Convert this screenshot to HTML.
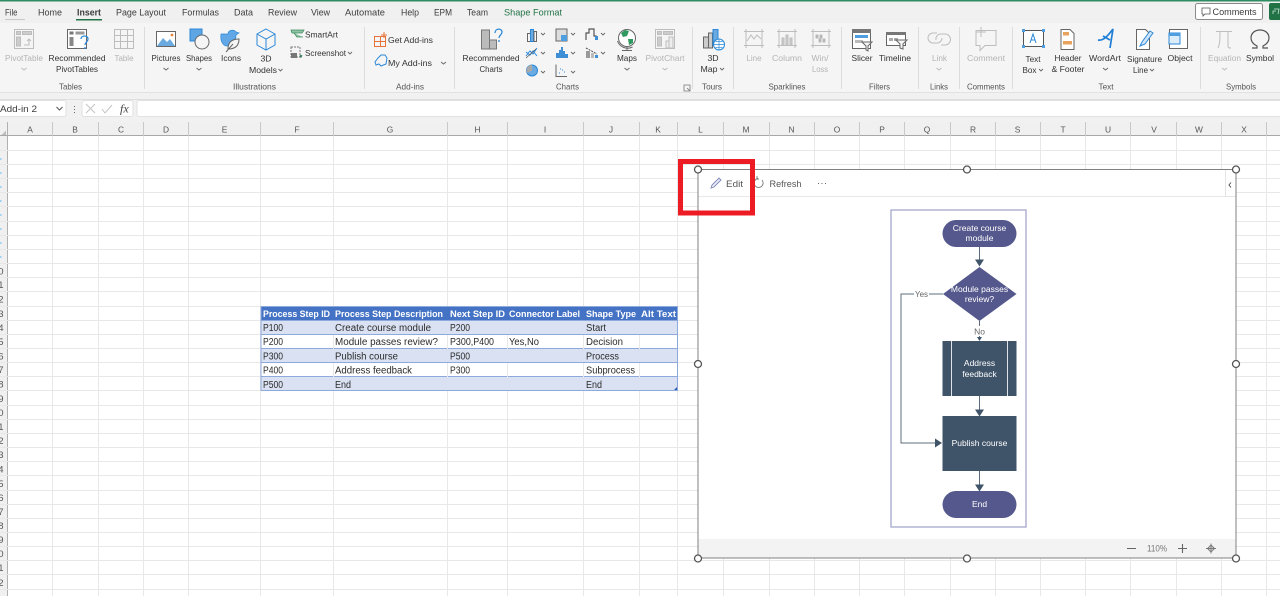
<!DOCTYPE html>
<html><head><meta charset="utf-8"><style>
html,body{margin:0;padding:0;background:#fff;width:1280px;height:596px;overflow:hidden}
svg{display:block;font-family:"Liberation Sans",sans-serif;filter:blur(.3px)}
text{fill:#333;font-size:8.7px}
.m{text-anchor:middle}
.d{fill:#b4b4b4}
.t{font-size:9.5px;fill:#3c3c3c}
.g{fill:#555;font-size:8.4px}
.c{font-size:10px;fill:#2b2b2b}
.h{font-size:9.5px;font-weight:bold;fill:#fff}
.w{fill:#fff;font-size:8.5px;text-anchor:middle}
.r{fill:#555;text-anchor:end;font-size:9.5px}
.dis{fill:none;stroke:#bdbdbd;stroke-width:1}
.ch{fill:none;stroke:#666;stroke-width:.9}
</style></head><body>
<svg width="1280" height="596" viewBox="0 0 1280 596" xmlns="http://www.w3.org/2000/svg">
<rect width="1280" height="596" fill="#fff"/>
<rect width="1280" height="23" fill="#f0f0f0"/>
<rect width="1280" height="1.500" fill="#2e8b62"/>
<rect y="23" width="1280" height="69" fill="#f5f5f5"/>
<rect y="92" width="1280" height="30" fill="#f1f1f1"/>
<rect y="92" width="1280" height="1" fill="#e2e2e2"/>
<rect y="99" width="1280" height="1" fill="#dedede"/>

<!-- tabs -->
<text x="5" y="15.500" class="t" textLength="12.500" lengthAdjust="spacingAndGlyphs">File</text>
<text x="38" y="15.500" class="t" textLength="24" lengthAdjust="spacingAndGlyphs">Home</text>
<text x="77" y="15.500" class="t" style="font-weight:bold;font-size:9px" textLength="24" lengthAdjust="spacingAndGlyphs">Insert</text>
<text x="116" y="15.500" class="t" textLength="50" lengthAdjust="spacingAndGlyphs">Page Layout</text>
<text x="182" y="15.500" class="t" textLength="37" lengthAdjust="spacingAndGlyphs">Formulas</text>
<text x="234" y="15.500" class="t" textLength="19" lengthAdjust="spacingAndGlyphs">Data</text>
<text x="268" y="15.500" class="t" textLength="29" lengthAdjust="spacingAndGlyphs">Review</text>
<text x="311" y="15.500" class="t" textLength="19" lengthAdjust="spacingAndGlyphs">View</text>
<text x="345" y="15.500" class="t" textLength="40" lengthAdjust="spacingAndGlyphs">Automate</text>
<text x="401" y="15.500" class="t" textLength="18" lengthAdjust="spacingAndGlyphs">Help</text>
<text x="434" y="15.500" class="t" textLength="18" lengthAdjust="spacingAndGlyphs">EPM</text>
<text x="467" y="15.500" class="t" textLength="21" lengthAdjust="spacingAndGlyphs">Team</text>
<text x="504" y="15.500" class="t" style="fill:#217346" textLength="58" lengthAdjust="spacingAndGlyphs">Shape Format</text>
<rect x="5" y="19" width="20" height="1" fill="#c8c8c8"/>
<rect x="76" y="19" width="26" height="1.500" fill="#217346"/>
<rect x="1195.500" y="3.500" width="67" height="16" rx="2" fill="#fff" stroke="#8a8a8a"/>
<path d="M1202 8h8v6h-5l-2 2v-2h-1z" fill="none" stroke="#555" stroke-width=".8"/>
<text x="1212.500" y="15" class="t" textLength="44" lengthAdjust="spacingAndGlyphs">Comments</text>
<rect x="1269" y="3" width="14" height="17" rx="2" fill="#217346"/>
<path d="M1273 14v-3h3M1274 9l5 0-1 5" fill="none" stroke="#cfe6da" stroke-width=".8"/>

<!-- separators -->
<path d="M144.500 27v62M364.500 27v62M454.500 27v62M692.500 27v62M733.500 27v62M841.500 27v62M918.500 27v62M959.500 27v62M1012.500 27v62M1200.500 27v62" stroke="#dcdcdc"/>

<!-- ribbon labels -->
<text x="24" y="61" class="m d" textLength="38" lengthAdjust="spacingAndGlyphs">PivotTable</text>
<path d="M21.500 68l2.500 2 2.500-2" class="dis"/>
<text x="77" y="61" class="m" textLength="57" lengthAdjust="spacingAndGlyphs">Recommended</text>
<text x="77" y="72" class="m" textLength="42" lengthAdjust="spacingAndGlyphs">PivotTables</text>
<text x="124" y="61" class="m d" textLength="19" lengthAdjust="spacingAndGlyphs">Table</text>
<text x="166" y="61" class="m" textLength="29" lengthAdjust="spacingAndGlyphs">Pictures</text><path d="M163.500 68l2.500 2 2.500-2" class="ch"/>
<text x="199" y="61" class="m" textLength="26" lengthAdjust="spacingAndGlyphs">Shapes</text><path d="M196.500 68l2.500 2 2.500-2" class="ch"/>
<text x="231" y="61" class="m" textLength="20" lengthAdjust="spacingAndGlyphs">Icons</text>
<text x="266" y="61.500" class="m">3D</text>
<text x="263" y="73" class="m" textLength="28" lengthAdjust="spacingAndGlyphs">Models</text><path d="M278.500 69l2 2 2-2" class="ch"/>
<text x="305" y="37.500" textLength="33" lengthAdjust="spacingAndGlyphs">SmartArt</text>
<text x="305" y="56" textLength="41" lengthAdjust="spacingAndGlyphs">Screenshot</text><path d="M348 52l2 2 2-2" class="ch"/>
<text x="388" y="43" textLength="45" lengthAdjust="spacingAndGlyphs">Get Add-ins</text>
<text x="388" y="66" textLength="44" lengthAdjust="spacingAndGlyphs">My Add-ins</text><path d="M441 62l2.500 2 2.500-2" class="ch"/>
<text x="491" y="61" class="m" textLength="57" lengthAdjust="spacingAndGlyphs">Recommended</text>
<text x="491" y="72" class="m" textLength="23" lengthAdjust="spacingAndGlyphs">Charts</text>
<text x="627" y="61" class="m" textLength="20" lengthAdjust="spacingAndGlyphs">Maps</text><path d="M624.500 68l2.500 2 2.500-2" class="ch"/>
<text x="665" y="61" class="m d" textLength="39" lengthAdjust="spacingAndGlyphs">PivotChart</text><path d="M662.500 68l2.500 2 2.500-2" class="dis"/>
<text x="713" y="61" class="m">3D</text>
<text x="709" y="72" class="m" textLength="17" lengthAdjust="spacingAndGlyphs">Map</text><path d="M720 68l2 2 2-2" class="ch"/>
<text x="754" y="61" class="m d" textLength="15" lengthAdjust="spacingAndGlyphs">Line</text>
<text x="787" y="61" class="m d" textLength="30" lengthAdjust="spacingAndGlyphs">Column</text>
<text x="820" y="61" class="m d" textLength="17" lengthAdjust="spacingAndGlyphs">Win/</text>
<text x="820" y="72" class="m d" textLength="16" lengthAdjust="spacingAndGlyphs">Loss</text>
<text x="862" y="61" class="m" textLength="21" lengthAdjust="spacingAndGlyphs">Slicer</text>
<text x="895" y="61" class="m" textLength="32" lengthAdjust="spacingAndGlyphs">Timeline</text>
<text x="939.500" y="61" class="m d" textLength="15" lengthAdjust="spacingAndGlyphs">Link</text><path d="M936.500 68l2.500 2 2.500-2" class="dis"/>
<text x="986" y="61" class="m d" textLength="38" lengthAdjust="spacingAndGlyphs">Comment</text>
<text x="1033" y="62" class="m" textLength="15" lengthAdjust="spacingAndGlyphs">Text</text>
<text x="1029.500" y="73" class="m" textLength="14" lengthAdjust="spacingAndGlyphs">Box</text><path d="M1039 69l2 2 2-2" class="ch"/>
<text x="1068" y="61" class="m" textLength="27" lengthAdjust="spacingAndGlyphs">Header</text>
<text x="1068" y="72" class="m" textLength="33" lengthAdjust="spacingAndGlyphs">&amp; Footer</text>
<text x="1105" y="61" class="m" textLength="32" lengthAdjust="spacingAndGlyphs">WordArt</text><path d="M1103 68l2.500 2 2.500-2" class="ch"/>
<text x="1144.500" y="62" class="m" textLength="35" lengthAdjust="spacingAndGlyphs">Signature</text>
<text x="1140.500" y="73" class="m" textLength="15" lengthAdjust="spacingAndGlyphs">Line</text><path d="M1150 69l2 2 2-2" class="ch"/>
<text x="1180" y="61" class="m" textLength="25" lengthAdjust="spacingAndGlyphs">Object</text>
<text x="1224.500" y="61" class="m d" textLength="33" lengthAdjust="spacingAndGlyphs">Equation</text><path d="M1222 68l2.500 2 2.500-2" class="dis"/>
<text x="1260" y="61" class="m" textLength="28" lengthAdjust="spacingAndGlyphs">Symbol</text>

<!-- group labels -->
<text x="70.500" y="89.500" class="m g" textLength="23" lengthAdjust="spacingAndGlyphs">Tables</text>
<text x="254.500" y="89.500" class="m g" textLength="43" lengthAdjust="spacingAndGlyphs">Illustrations</text>
<text x="410" y="89.500" class="m g" textLength="28" lengthAdjust="spacingAndGlyphs">Add-ins</text>
<text x="567.500" y="89.500" class="m g" textLength="23" lengthAdjust="spacingAndGlyphs">Charts</text>
<text x="712" y="89.500" class="m g" textLength="20" lengthAdjust="spacingAndGlyphs">Tours</text>
<text x="787" y="89.500" class="m g" textLength="37" lengthAdjust="spacingAndGlyphs">Sparklines</text>
<text x="879.500" y="89.500" class="m g" textLength="21" lengthAdjust="spacingAndGlyphs">Filters</text>
<text x="939" y="89.500" class="m g" textLength="18" lengthAdjust="spacingAndGlyphs">Links</text>
<text x="986" y="89.500" class="m g" textLength="38" lengthAdjust="spacingAndGlyphs">Comments</text>
<text x="1106" y="89.500" class="m g" textLength="15" lengthAdjust="spacingAndGlyphs">Text</text>
<text x="1241" y="89.500" class="m g" textLength="30" lengthAdjust="spacingAndGlyphs">Symbols</text>
<path d="M684 85h6v6h-6zM687 88l3 3" fill="none" stroke="#777" stroke-width=".8"/>

<!-- ribbon icons: tables -->
<g class="dis"><rect x="14.500" y="29.500" width="19" height="19"/><rect x="16.500" y="31.500" width="4" height="3" fill="#ccc"/><rect x="22.500" y="31.500" width="9" height="3" fill="#ccc"/><rect x="16.500" y="37" width="4" height="9" fill="#ccc"/><path d="M24 45h5v-6M27 41l2-2 2 2"/></g>
<rect x="67.500" y="29.500" width="19" height="19" fill="#fff" stroke="#666"/><rect x="69.500" y="31.500" width="4" height="3" fill="#777"/><rect x="75.500" y="31.500" width="9" height="3" fill="#999"/><rect x="69.500" y="37" width="4" height="9" fill="#888"/>
<path d="M81 39c0-4 7-4 7 0 0 3-3 3-3 6M85 47v2" fill="none" stroke="#2b88d8" stroke-width="1.300"/>
<g class="dis"><rect x="114.500" y="29.500" width="19" height="19"/><path d="M114 35.500h20M114 41.500h20M120.500 29v20M127.500 29v20"/></g>
<!-- illustrations -->
<rect x="156.500" y="31.500" width="19" height="15" fill="#fff" stroke="#666"/><path d="M157 46l6-8 4 4 3-3 5 7z" fill="#6aaae0"/><circle cx="172" cy="35" r="1.400" fill="#e8833a"/>
<rect x="190" y="29" width="12" height="12" fill="#5ea6e3" stroke="#2b88d8"/><circle cx="202" cy="42" r="7" fill="#f5f5f5" stroke="#666"/>
<path d="M221 34h7c0-4 6-5 8-2l3 1-3 2c0 6-3 11-9 11-4 0-7-5-6-12z" fill="#62a8e6" stroke="#2b88d8" stroke-width=".7"/>
<path d="M228 49c0-7 4-10 11-10 0 7-4 10-11 10zM226 52l7-8" fill="#f5f5f5" stroke="#666"/>
<path d="M266 29l9 5v11l-9 5-9-5V34zM257 34l9 5 9-5M266 39v11" fill="none" stroke="#2b88d8"/>
<path d="M291 30h13l-2 3h-10zM294 33l3 4h6" fill="#8fc4a4" stroke="#3d8b60" stroke-width=".8"/>
<rect x="291" y="47" width="9" height="10" fill="none" stroke="#777" stroke-dasharray="2 1"/><rect x="291" y="53" width="6" height="5" fill="#777"/><path d="M300 55l1 2 1-2" stroke="#217346" fill="none"/>
<!-- add-ins -->
<path d="M374.500 36.500h6v5h-6zM380.500 36.500h5v5h-5zM374.500 41.500h6v5h-6zM380.500 41.500h5v5h-5zM384 32v6M381 35h6" fill="none" stroke="#e8743b"/>
<path d="M378 58l3-3 4 0 2 3-1 6-5 2-2-2-3 1-1-3z" fill="none" stroke="#2b88d8"/>
<!-- charts -->
<path d="M481.500 30h8v19h-8zM489.500 40h7v9h-7z" fill="#bbb" stroke="#777"/><path d="M495 33c0-5 7-5 7-1 0 3-3 3-3 6M499 40v2" fill="none" stroke="#2b88d8" stroke-width="1.300"/>
<rect x="527.500" y="33.500" width="3" height="8" fill="none" stroke="#666"/><rect x="530.500" y="29.500" width="3" height="12" fill="#6aaae0" stroke="#2b88d8"/><rect x="534" y="31.500" width="2.500" height="10" fill="none" stroke="#666"/><path d="M541 33l2 2 2-2M541 52l2 2 2-2M541 71l2 2 2-2" class="ch"/>
<path d="M526 56l4-5 3 3 4-6M526 52l4 3 3-4 4 5" fill="none" stroke="#2b88d8"/><path d="M526 58l10-9" stroke="#555" stroke-width=".7"/>
<circle cx="532" cy="70.500" r="5.500" fill="#6aaae0" stroke="#2b88d8"/><path d="M532 70.500v-5.500a5.500 5.500 0 0 0-5 8z" fill="#aaa"/>
<rect x="556" y="29" width="11" height="12" fill="#ddd" stroke="#666"/><rect x="561" y="35" width="6" height="6" fill="#4f9ee0"/><path d="M571 33l2 2 2-2M571 52l2 2 2-2M571 71l2 2 2-2" class="ch"/>
<path d="M556 58v-5h3v-3h2v-3h2v4h2v3h3v4z" fill="#3e8fd6"/>
<path d="M556 64.500v12h11" fill="none" stroke="#666"/><path d="M559 73h1M562 70h1M564 72h1M560 69h1" stroke="#2b88d8"/>
<path d="M586 40v-7h3v-4h5v7h2v4" fill="none" stroke="#555" stroke-width="1.200"/><rect x="595" y="36" width="3" height="4" fill="#3e8fd6"/><path d="M601 33l2 2 2-2M601 52l2 2 2-2" class="ch"/>
<path d="M586 48l11 6" stroke="#555" stroke-dasharray="2 1"/><rect x="586" y="51" width="4" height="7" fill="#999"/><rect x="591" y="53" width="3" height="5" fill="#bbb"/><rect x="595" y="55" width="3" height="3" fill="#3e8fd6"/>
<!-- maps -->
<circle cx="627" cy="38" r="8.500" fill="#fff" stroke="#666"/><path d="M621 33l4-3 4 1-2 5-4 1zM628 39l5 0 0 4-4 2z" fill="#2f9a5f"/><path d="M617.500 41c2 6 9 9 15 6M627 47v3M622 50.500h10" fill="none" stroke="#666"/>
<g class="dis"><rect x="655.500" y="29.500" width="19" height="19"/><rect x="657.500" y="31.500" width="4" height="3" fill="#ccc"/><rect x="663.500" y="31.500" width="9" height="3" fill="#ccc"/><rect x="657.500" y="37" width="4" height="9" fill="#ccc"/><path d="M666 41h3v7h-3zM669 37h4v11h-4z" fill="#eee"/></g>
<!-- 3d map -->
<path d="M703.500 37h5v11h-5zM708.500 33h4v15h-4z" fill="#ccc" stroke="#666"/><rect x="713" y="29.500" width="5" height="16" fill="#6aaae0" stroke="#2b88d8"/><circle cx="719" cy="44.500" r="5.500" fill="#fff" stroke="#2b88d8"/><path d="M713.500 44.500h11M719 39v11M715 41c3 1 5 1 8 0M715 48c3-1 5-1 8 0" fill="none" stroke="#2b88d8" stroke-width=".7"/>
<!-- sparklines -->
<g class="dis"><path d="M744 31.500h20M744 45.500h20M746 29v19M762 29v19M747 41l4-6 3 4 3-4 4 4"/></g>
<g class="dis"><path d="M777 31.500h20M777 45.500h20M779 29v19M795 29v19"/><path d="M782 38h2v7h-2zM786 35h2v10h-2zM790 38h2v7h-2z" fill="#ccc"/></g>
<g class="dis"><path d="M811 31.500h20M811 45.500h20M813 29v19M829 29v19"/><path d="M816 35h2v3h-2zM820 35h2v3h-2zM823 39h2v3h-2zM819 39h2v3h-2z" fill="#aaa"/></g>
<!-- filters -->
<rect x="852.500" y="29.500" width="18" height="19" fill="#fff" stroke="#666"/><rect x="852" y="29" width="19" height="4" fill="#777"/><rect x="855" y="35" width="13" height="3" fill="#4f9ee0"/><rect x="855" y="40" width="8" height="3" fill="#bbb"/><path d="M862 42h10l-4 4v5l-2-1v-4z" fill="#f5f5f5" stroke="#666"/>
<rect x="886.500" y="32.500" width="19" height="13" fill="#fff" stroke="#666"/><rect x="886" y="32" width="20" height="3" fill="#777"/><rect x="889" y="38" width="4" height="3" fill="#aaa"/><rect x="894" y="38" width="4" height="3" fill="#aaa"/><path d="M896 40h11l-4 4v5l-3-1v-4z" fill="#f5f5f5" stroke="#666"/>
<!-- link -->
<g class="dis" stroke-width="1.300"><path d="M937 33h-4a5 5 0 0 0 0 10h4a5 5 0 0 0 5-5M941 45h4a5 5 0 0 0 0-11h-4a5 5 0 0 0-5 6"/></g>
<path d="M976 30.500h20v15h-11l-5 5v-5h-4zM981 27v10M976 32h10" class="dis"/>
<!-- text -->
<rect x="1023.500" y="30.500" width="20" height="16" fill="#fff" stroke="#555"/>
<path d="M1022 29h3v3h-3zM1042 29h3v3h-3zM1022 45h3v3h-3zM1042 45h3v3h-3z" fill="#4f9ee0"/>
<path d="M1030 43l3-9 3 9M1031 40h4" fill="none" stroke="#2b88d8"/>
<path d="M1061 29.500h9l4 4v16h-13z" fill="#fff" stroke="#666"/><rect x="1063" y="32" width="6" height="3.500" fill="#e8a35e"/><rect x="1063" y="41" width="9" height="3.500" fill="#e8a35e"/>
<path d="M1098 40c5 1 9-3 15-11l-3 19M1103 36l7 4" fill="none" stroke="#1f7fd6" stroke-width="1.700"/>
<path d="M1136.500 29.500h9l4 4v16h-13z" fill="#fff" stroke="#666"/><path d="M1140 46l2-4 8-11 3 2-8 11z" fill="#cfe5f7" stroke="#2b88d8"/>
<rect x="1169.500" y="29.500" width="18" height="19" fill="#fff" stroke="#666"/><rect x="1169" y="33" width="11" height="11" fill="#dcecf9" stroke="#2b88d8"/><rect x="1169" y="33" width="11" height="3" fill="#4f9ee0"/>
<path d="M1216 31.500h16M1220 32c0 6 0 12-2 16M1228 32v14c0 2 1 2 3 2" class="dis" stroke-width="1.300"/>
<path d="M1252 48h5v-2c-4-2-6-5-6-8 0-5 4-8 9-8s9 3 9 8c0 3-2 6-6 8v2h5" fill="none" stroke="#555" stroke-width="1.200"/>

<!-- formula bar -->
<rect x="-1" y="100.500" width="67" height="16" rx="2" fill="#fff" stroke="#e1e1e1"/>
<text x="0" y="112" class="t" textLength="37" lengthAdjust="spacingAndGlyphs">Add-in 2</text>
<path d="M56.500 107l3 3 3-3" fill="none" stroke="#555"/>
<path d="M74.500 106v1M74.500 109v1M74.500 112v1" stroke="#666"/>
<rect x="82" y="100.500" width="51" height="16" rx="2" fill="#fff" stroke="#e1e1e1"/>
<path d="M86 104l9 9M95 104l-9 9M102 109l3 4 7-8" fill="none" stroke="#c4c4c4"/>
<text x="120" y="112.500" style="font-family:'Liberation Serif',serif;font-style:italic;font-size:12px;fill:#444">fx</text>
<rect x="137" y="100.500" width="1150" height="16" rx="2" fill="#fff" stroke="#e1e1e1"/>

<!-- headers -->
<rect y="122" width="1280" height="14" fill="#f0f0f0"/>
<rect y="122" width="7" height="474" fill="#f0f0f0"/>
<path d="M1 135.500l5-5v5z" fill="#bdbdbd"/>
<path d="M7.500 122V596" stroke="#b0b0b0"/>
<path d="M0 135.500H1280" stroke="#a8a8a8"/>
<path d="M52.500 122v14M98.500 122v14M143.500 122v14M188.500 122v14M260.500 122v14M333.500 122v14M447.500 122v14M507.500 122v14M583.500 122v14M639.500 122v14M677.500 122v14M723.500 122v14M769.500 122v14M814.500 122v14M859.500 122v14M904.500 122v14M950.500 122v14M995.500 122v14M1040.500 122v14M1085.500 122v14M1130.500 122v14M1176.500 122v14M1221.500 122v14M1266.500 122v14" stroke="#c8c8c8"/>
<g style="text-anchor:middle">
<text x="30" y="132.500" class="g">A</text><text x="75" y="132.500" class="g">B</text><text x="121" y="132.500" class="g">C</text><text x="166" y="132.500" class="g">D</text><text x="224.500" y="132.500" class="g">E</text><text x="297" y="132.500" class="g">F</text><text x="390" y="132.500" class="g">G</text><text x="477.500" y="132.500" class="g">H</text><text x="545" y="132.500" class="g">I</text><text x="611" y="132.500" class="g">J</text><text x="658" y="132.500" class="g">K</text><text x="700.500" y="132.500" class="g">L</text><text x="746" y="132.500" class="g">M</text><text x="791.500" y="132.500" class="g">N</text><text x="837" y="132.500" class="g">O</text><text x="882" y="132.500" class="g">P</text><text x="927" y="132.500" class="g">Q</text><text x="973" y="132.500" class="g">R</text><text x="1017.500" y="132.500" class="g">S</text><text x="1063" y="132.500" class="g">T</text><text x="1108" y="132.500" class="g">U</text><text x="1154" y="132.500" class="g">V</text><text x="1199" y="132.500" class="g">W</text><text x="1244" y="132.500" class="g">X</text>
</g>
<!-- grid -->
<path d="M52.500 136V596M98.500 136V596M143.500 136V596M188.500 136V596M260.500 136V596M333.500 136V596M447.500 136V596M507.500 136V596M583.500 136V596M639.500 136V596M677.500 136V596M723.500 136V596M769.500 136V596M814.500 136V596M859.500 136V596M904.500 136V596M950.500 136V596M995.500 136V596M1040.500 136V596M1085.500 136V596M1130.500 136V596M1176.500 136V596M1221.500 136V596M1266.500 136V596" stroke="#e8e8e8"/>
<path d="M0 150.500H1280M0 164.500H1280M0 178.500H1280M0 192.500H1280M0 206.500H1280M0 221.500H1280M0 235.500H1280M0 249.500H1280M0 263.500H1280M0 277.500H1280M0 291.500H1280M0 306.500H1280M0 320.500H1280M0 334.500H1280M0 348.500H1280M0 362.500H1280M0 376.500H1280M0 390.500H1280M0 405.500H1280M0 419.500H1280M0 433.500H1280M0 447.500H1280M0 461.500H1280M0 475.500H1280M0 490.500H1280M0 504.500H1280M0 518.500H1280M0 532.500H1280M0 546.500H1280M0 560.500H1280M0 574.500H1280M0 589.500H1280" stroke="#e8e8e8"/>
<!-- row header digits -->
<path d="M0 158h1.500v2H0zM0 172h1.500v2H0zM0 186h1.500v2H0zM0 200h1.500v2H0zM0 214h1.500v2H0zM0 228h1.500v2H0zM0 242h1.500v2H0zM0 256h1.500v2H0z" fill="#9fd0f3"/>
<g>
<text x="3.500" y="274.500" class="r">10</text><text x="3.500" y="288" class="r">11</text><text x="3.500" y="302.500" class="r">12</text><text x="3.500" y="317" class="r">13</text><text x="3.500" y="331" class="r">14</text><text x="3.500" y="345" class="r">15</text><text x="3.500" y="359.500" class="r">16</text><text x="3.500" y="373" class="r">17</text><text x="3.500" y="387.500" class="r">18</text><text x="3.500" y="402" class="r">19</text><text x="3.500" y="416" class="r">20</text><text x="3.500" y="430" class="r">21</text><text x="3.500" y="444" class="r">22</text><text x="3.500" y="458" class="r">23</text><text x="3.500" y="472.500" class="r">24</text><text x="3.500" y="487" class="r">25</text><text x="3.500" y="501" class="r">26</text><text x="3.500" y="515" class="r">27</text><text x="3.500" y="529" class="r">28</text><text x="3.500" y="543" class="r">29</text><text x="3.500" y="557" class="r">30</text><text x="3.500" y="571" class="r">31</text><text x="3.500" y="586" class="r">32</text>
</g>

<!-- table -->
<rect x="261" y="306.500" width="417" height="14" fill="#4472c4"/>
<rect x="261" y="320.500" width="417" height="14" fill="#d9e1f2"/>
<rect x="261" y="334.500" width="417" height="14" fill="#fff"/>
<rect x="261" y="348.500" width="417" height="14" fill="#d9e1f2"/>
<rect x="261" y="362.500" width="417" height="14" fill="#fff"/>
<rect x="261" y="376.500" width="417" height="14" fill="#d9e1f2"/>
<path d="M261 320.500H678M261 334.500H678M261 348.500H678M261 362.500H678M261 376.500H678M261 390.500H678M261 306.500H678M261 306V391M677.500 306V391" stroke="#8ea9db" fill="none"/>
<path d="M333.500 335v14M447.500 335v14M507.500 335v14M583.500 335v14M639.500 335v14M333.500 363v14M447.500 363v14M507.500 363v14M583.500 363v14M639.500 363v14" stroke="#e8e8e8"/>
<path d="M674 390l3-3v3z" fill="#2f5eb3"/>
<text x="263" y="317" class="h" textLength="67" lengthAdjust="spacingAndGlyphs">Process Step ID</text>
<text x="335" y="317" class="h" textLength="108" lengthAdjust="spacingAndGlyphs">Process Step Description</text>
<text x="450" y="317" class="h" textLength="55" lengthAdjust="spacingAndGlyphs">Next Step ID</text>
<text x="509" y="317" class="h" textLength="71" lengthAdjust="spacingAndGlyphs">Connector Label</text>
<text x="586" y="317" class="h" textLength="50" lengthAdjust="spacingAndGlyphs">Shape Type</text>
<text x="641" y="317" class="h" textLength="35" lengthAdjust="spacingAndGlyphs">Alt Text</text>
<text x="263" y="331" class="c" textLength="20" lengthAdjust="spacingAndGlyphs">P100</text><text x="335" y="331" class="c" textLength="96" lengthAdjust="spacingAndGlyphs">Create course module</text><text x="450" y="331" class="c" textLength="20" lengthAdjust="spacingAndGlyphs">P200</text><text x="586" y="331" class="c" textLength="20" lengthAdjust="spacingAndGlyphs">Start</text>
<text x="263" y="345" class="c" textLength="20" lengthAdjust="spacingAndGlyphs">P200</text><text x="335" y="345" class="c" textLength="103" lengthAdjust="spacingAndGlyphs">Module passes review?</text><text x="450" y="345" class="c" textLength="44" lengthAdjust="spacingAndGlyphs">P300,P400</text><text x="509" y="345" class="c" textLength="30" lengthAdjust="spacingAndGlyphs">Yes,No</text><text x="586" y="345" class="c" textLength="37" lengthAdjust="spacingAndGlyphs">Decision</text>
<text x="263" y="359.500" class="c" textLength="20" lengthAdjust="spacingAndGlyphs">P300</text><text x="335" y="359.500" class="c" textLength="63" lengthAdjust="spacingAndGlyphs">Publish course</text><text x="450" y="359.500" class="c" textLength="20" lengthAdjust="spacingAndGlyphs">P500</text><text x="586" y="359.500" class="c" textLength="33" lengthAdjust="spacingAndGlyphs">Process</text>
<text x="263" y="373.500" class="c" textLength="20" lengthAdjust="spacingAndGlyphs">P400</text><text x="335" y="373.500" class="c" textLength="77" lengthAdjust="spacingAndGlyphs">Address feedback</text><text x="450" y="373.500" class="c" textLength="20" lengthAdjust="spacingAndGlyphs">P300</text><text x="586" y="373.500" class="c" textLength="49" lengthAdjust="spacingAndGlyphs">Subprocess</text>
<text x="263" y="388" class="c" textLength="20" lengthAdjust="spacingAndGlyphs">P500</text><text x="335" y="388" class="c" textLength="16" lengthAdjust="spacingAndGlyphs">End</text><text x="586" y="388" class="c" textLength="16" lengthAdjust="spacingAndGlyphs">End</text>

<!-- widget -->
<rect x="698" y="169.500" width="538" height="388.500" fill="#fff"/>
<path d="M698 196.500H1226" stroke="#e8e8e8"/>
<path d="M1225.500 170V196.500H1236" stroke="#e4e4e4" fill="none"/>
<path d="M1231 182.500l-2 2.500 2 2.500" fill="none" stroke="#555"/>
<rect x="698" y="539" width="538" height="19" fill="#f3f3f3"/>
<rect x="698" y="169.500" width="538" height="388.500" fill="none" stroke="#808080"/>
<path d="M711 188l1-3 7-7 2 2-7 7z" fill="#e8eaf5" stroke="#7f86b8" stroke-width=".9"/>
<text x="726" y="187" style="font-size:9.500px;fill:#555" textLength="17" lengthAdjust="spacingAndGlyphs">Edit</text>
<path d="M762 180a4.500 4.500 0 1 1-4-1.500M757 176v3h2" fill="none" stroke="#777" stroke-width=".9"/>
<text x="769.500" y="187" style="font-size:9.500px;fill:#555" textLength="32" lengthAdjust="spacingAndGlyphs">Refresh</text>
<path d="M818 183.500h1M821.500 183.500h1M825 183.500h1" stroke="#666"/>
<path d="M1127 548.500h9M1178 548.500h9M1182.500 544v9" stroke="#666" stroke-width="1.100" fill="none"/>
<text x="1157" y="551.500" class="m" style="font-size:9px;fill:#777" textLength="20" lengthAdjust="spacingAndGlyphs">110%</text>
<path d="M1211 545l3.500 3.500-3.500 3.500-3.500-3.500zM1211 543.500v10M1206 548.500h10" fill="#ddd" stroke="#777" stroke-width=".9"/>
<g fill="#fff" stroke="#555" stroke-width="1.300">
<circle cx="698" cy="169.500" r="3.500"/><circle cx="967" cy="169.500" r="3.500"/><circle cx="1236" cy="169.500" r="3.500"/>
<circle cx="698" cy="364" r="3.500"/><circle cx="1236" cy="364" r="3.500"/>
<circle cx="698" cy="558.500" r="3.500"/><circle cx="967" cy="558.500" r="3.500"/><circle cx="1236" cy="558.500" r="3.500"/>
</g>

<!-- diagram -->
<rect x="891" y="210" width="135" height="317" fill="#fff" stroke="#a5a8cc" stroke-width="1.300"/>
<g fill="none" stroke="#5d6d7e" stroke-width="1">
<path d="M979.500 246V260"/>
<path d="M979.500 321V326M979.500 336V337"/>
<path d="M979.500 396V410"/>
<path d="M979.500 471V485"/>
<path d="M943 294H929M914 294H901V443H936"/>
</g>
<g fill="#3f5369">
<path d="M975 259.500h9l-4.500 7z"/><path d="M977 337h5l-2.500 4z"/><path d="M975 409.500h9l-4.500 7z"/><path d="M975 484.500h9l-4.500 7z"/><path d="M935 438.500v9l7-4.500z"/>
</g>
<rect x="942.500" y="220" width="74" height="27" rx="13.500" fill="#55588c"/>
<path d="M979.500 267L1016.500 294L979.500 321L943 294z" fill="#55588c"/>
<rect x="942.500" y="341" width="74" height="55" fill="#3f5369"/>
<path d="M951.500 341V396M1007.500 341V396" stroke="#dfe3e8" stroke-width="1"/>
<rect x="942.500" y="416" width="74" height="55" fill="#3f5369"/>
<rect x="942.500" y="491" width="74" height="27" rx="13.500" fill="#55588c"/>
<text x="979.500" y="231" class="w">Create course</text>
<text x="979.500" y="241" class="w">module</text>
<text x="979.500" y="292" class="w">Module passes</text>
<text x="979.500" y="302" class="w">review?</text>
<text x="979.500" y="366" class="w">Address</text>
<text x="979.500" y="377" class="w">feedback</text>
<text x="979.500" y="446" class="w">Publish course</text>
<text x="979.500" y="507" class="w">End</text>
<text x="921.500" y="297" class="m" style="font-size:8.500px;fill:#666" textLength="13" lengthAdjust="spacingAndGlyphs">Yes</text>
<text x="979.500" y="334.500" class="m" style="font-size:8.500px;fill:#666">No</text>

<!-- red highlight -->
<rect x="680.500" y="161.500" width="72" height="51.500" fill="none" stroke="#ed1c24" stroke-width="5"/>
</svg>
</body></html>
